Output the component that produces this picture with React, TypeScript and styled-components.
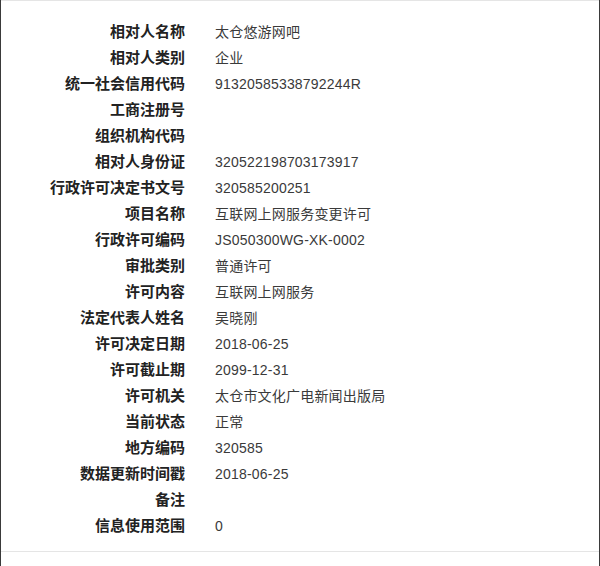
import { Fragment } from "react";
import styled, { createGlobalStyle } from "styled-components";

const GlobalStyle = createGlobalStyle`
  html, body {
    margin: 0;
    padding: 0;
    background: #3a3a3a;
  }
  body {
    font-family: "Liberation Sans", Arial, "Noto Sans CJK SC", sans-serif;
  }
`;

const Modal = styled.div`
  margin-left: 1px;
  width: 598px;
  height: 566px;
  background: #fff;
  border-top: 1px solid #e5e5e5;
  box-sizing: border-box;
`;

const Body = styled.dl`
  margin: 0;
  padding: 18px 0 12px;
  display: grid;
  grid-template-columns: 184px 1fr;
  column-gap: 30px;
  border-bottom: 1px solid #e5e5e5;
`;

const Label = styled.dt`
  text-align: right;
  font-size: 15px;
  font-weight: bold;
  line-height: 26px;
  height: 26px;
  color: #222;
  white-space: nowrap;
`;

const Value = styled.dd`
  margin: 0;
  font-size: 14px;
  line-height: 26px;
  height: 26px;
  color: #3a3a3a;
  letter-spacing: 0.2px;
  white-space: nowrap;
`;

const rows: [string, string][] = [
  ["相对人名称", "太仓悠游网吧"],
  ["相对人类别", "企业"],
  ["统一社会信用代码", "91320585338792244R"],
  ["工商注册号", ""],
  ["组织机构代码", ""],
  ["相对人身份证", "320522198703173917"],
  ["行政许可决定书文号", "320585200251"],
  ["项目名称", "互联网上网服务变更许可"],
  ["行政许可编码", "JS050300WG-XK-0002"],
  ["审批类别", "普通许可"],
  ["许可内容", "互联网上网服务"],
  ["法定代表人姓名", "吴晓刚"],
  ["许可决定日期", "2018-06-25"],
  ["许可截止期", "2099-12-31"],
  ["许可机关", "太仓市文化广电新闻出版局"],
  ["当前状态", "正常"],
  ["地方编码", "320585"],
  ["数据更新时间戳", "2018-06-25"],
  ["备注", ""],
  ["信息使用范围", "0"],
];

export default function App() {
  return (
    <>
      <GlobalStyle />
      <Modal>
        <Body>
          {rows.map(([k, v]) => (
            <Fragment key={k}>
              <Label>{k}</Label>
              <Value>{v}</Value>
            </Fragment>
          ))}
        </Body>
      </Modal>
    </>
  );
}
